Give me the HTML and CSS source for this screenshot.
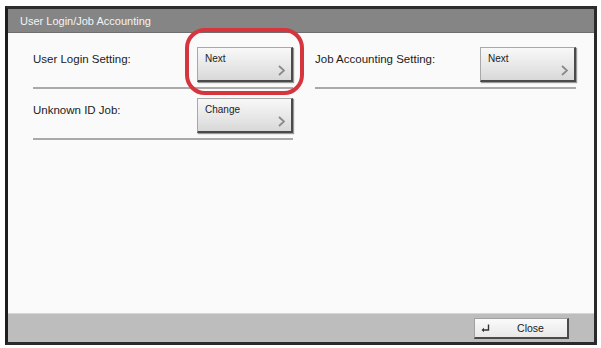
FILE: index.html
```html
<!DOCTYPE html>
<html>
<head>
<meta charset="utf-8">
<link rel="stylesheet" href="styles.css">
</head>
<body>
<div class="frame">
  <div class="title">User Login/Job Accounting</div>
  <div class="content">
    <div class="grid">
      <div class="setting">
        <div class="row">
          <span class="label">User Login Setting:</span>
          <div class="btn-wrap">
            <button class="btn"><span class="btn-text">Next</span>
              <svg class="chev" width="7" height="11" viewBox="0 0 7 11"><path d="M1 1 L6 5.5 L1 10" fill="none" stroke="#8a8a8a" stroke-width="1.8"/></svg>
            </button>
            <div class="ring"></div>
          </div>
        </div>
        <div class="sep"></div>
      </div>
      <div class="setting">
        <div class="row">
          <span class="label">Job Accounting Setting:</span>
          <div class="btn-wrap">
            <button class="btn"><span class="btn-text">Next</span>
              <svg class="chev" width="7" height="11" viewBox="0 0 7 11"><path d="M1 1 L6 5.5 L1 10" fill="none" stroke="#8a8a8a" stroke-width="1.8"/></svg>
            </button>
          </div>
        </div>
        <div class="sep"></div>
      </div>
      <div class="setting">
        <div class="row">
          <span class="label">Unknown ID Job:</span>
          <div class="btn-wrap">
            <button class="btn"><span class="btn-text">Change</span>
              <svg class="chev" width="7" height="11" viewBox="0 0 7 11"><path d="M1 1 L6 5.5 L1 10" fill="none" stroke="#8a8a8a" stroke-width="1.8"/></svg>
            </button>
          </div>
        </div>
        <div class="sep"></div>
      </div>
    </div>
  </div>
  <div class="footer">
    <button class="close">
      <svg class="ret" width="9" height="9" viewBox="0 0 9 9"><path d="M7.5 0.5 V6 H2" fill="none" stroke="#333" stroke-width="1.4"/><path d="M0.5 6 L3 3.8 V8.2 Z" fill="#333"/></svg>
      <span class="close-text">Close</span>
    </button>
  </div>
</div>
</body>
</html>
```
FILE: styles.css
```css
html, body {
  margin: 0;
  padding: 0;
  background: #ffffff;
  font-family: "Liberation Sans", Arial, sans-serif;
}
body {
  width: 601px;
  height: 348px;
  overflow: hidden;
}
.frame {
  box-sizing: border-box;
  margin: 6px 0 0 5px;
  width: 592px;
  height: 339px;
  border-top: 3px solid #2e2e2e;
  border-left: 3px solid #1e1e1e;
  border-right: 3px solid #2a2a2a;
  border-bottom: 3px solid #2a2a2a;
  display: flex;
  flex-direction: column;
  background: #fafafa;
}
.title {
  height: 24px;
  background: #858585;
  color: #f4f4f4;
  font-size: 11px;
  line-height: 25px;
  padding-left: 12px;
  border-bottom: 1px solid #6e6e6e;
  box-sizing: border-box;
}
.content {
  flex: 1;
  padding: 14px 0 0 25px;
  background: #fafafa;
}
.grid {
  display: grid;
  grid-template-columns: 260px 261px;
  column-gap: 22px;
}
.row {
  display: flex;
  justify-content: space-between;
  align-items: flex-start;
  height: 35px;
}
.label {
  font-size: 11.5px;
  color: #1a1a1a;
  padding-top: 6px;
}
.btn-wrap {
  position: relative;
  width: 96px;
  height: 35px;
}
.btn {
  box-sizing: border-box;
  width: 96px;
  height: 35px;
  margin: 0;
  padding: 0;
  position: relative;
  background: linear-gradient(#f8f8f8, #e6e6e6 60%, #d8d8d8);
  border-top: 1px solid #a8a8a8;
  border-left: 1px solid #a8a8a8;
  border-right: 2px solid #4a4a4a;
  border-bottom: 2px solid #4a4a4a;
  box-shadow: 1px 1px 1px #9a9a9a;
  display: block;
  font-family: "Liberation Sans", Arial, sans-serif;
}
.btn-text {
  position: absolute;
  left: 7px;
  top: 5px;
  font-size: 10px;
  color: #222;
}
.chev {
  position: absolute;
  right: 6px;
  bottom: 4px;
}
.ring {
  position: absolute;
  left: -12px;
  top: -19px;
  width: 119px;
  height: 67px;
  box-sizing: border-box;
  border: 4px solid #d7353d;
  border-radius: 20px;
}
.sep {
  height: 2px;
  background: #a9a9a9;
  margin-top: 5px;
  margin-bottom: 9px;
}
.footer {
  height: 29px;
  box-sizing: border-box;
  background: #bdbdbd;
  border-top: 1px solid #d6d6d6;
  display: flex;
  justify-content: flex-end;
  align-items: flex-start;
  padding: 4px 25px 0 0;
}
.close {
  box-sizing: border-box;
  width: 95px;
  height: 21px;
  margin: 0;
  padding: 0 0 0 6px;
  background: linear-gradient(#fafafa, #e8e8e8);
  border-top: 1px solid #a0a0a0;
  border-left: 1px solid #a0a0a0;
  border-right: 2px solid #4a4a4a;
  border-bottom: 2px solid #4a4a4a;
  display: flex;
  align-items: center;
  font-family: "Liberation Sans", Arial, sans-serif;
}
.ret {
  flex: none;
}
.close-text {
  flex: 1;
  text-align: center;
  font-size: 10.5px;
  color: #222;
  padding-left: 4px;
}
```
